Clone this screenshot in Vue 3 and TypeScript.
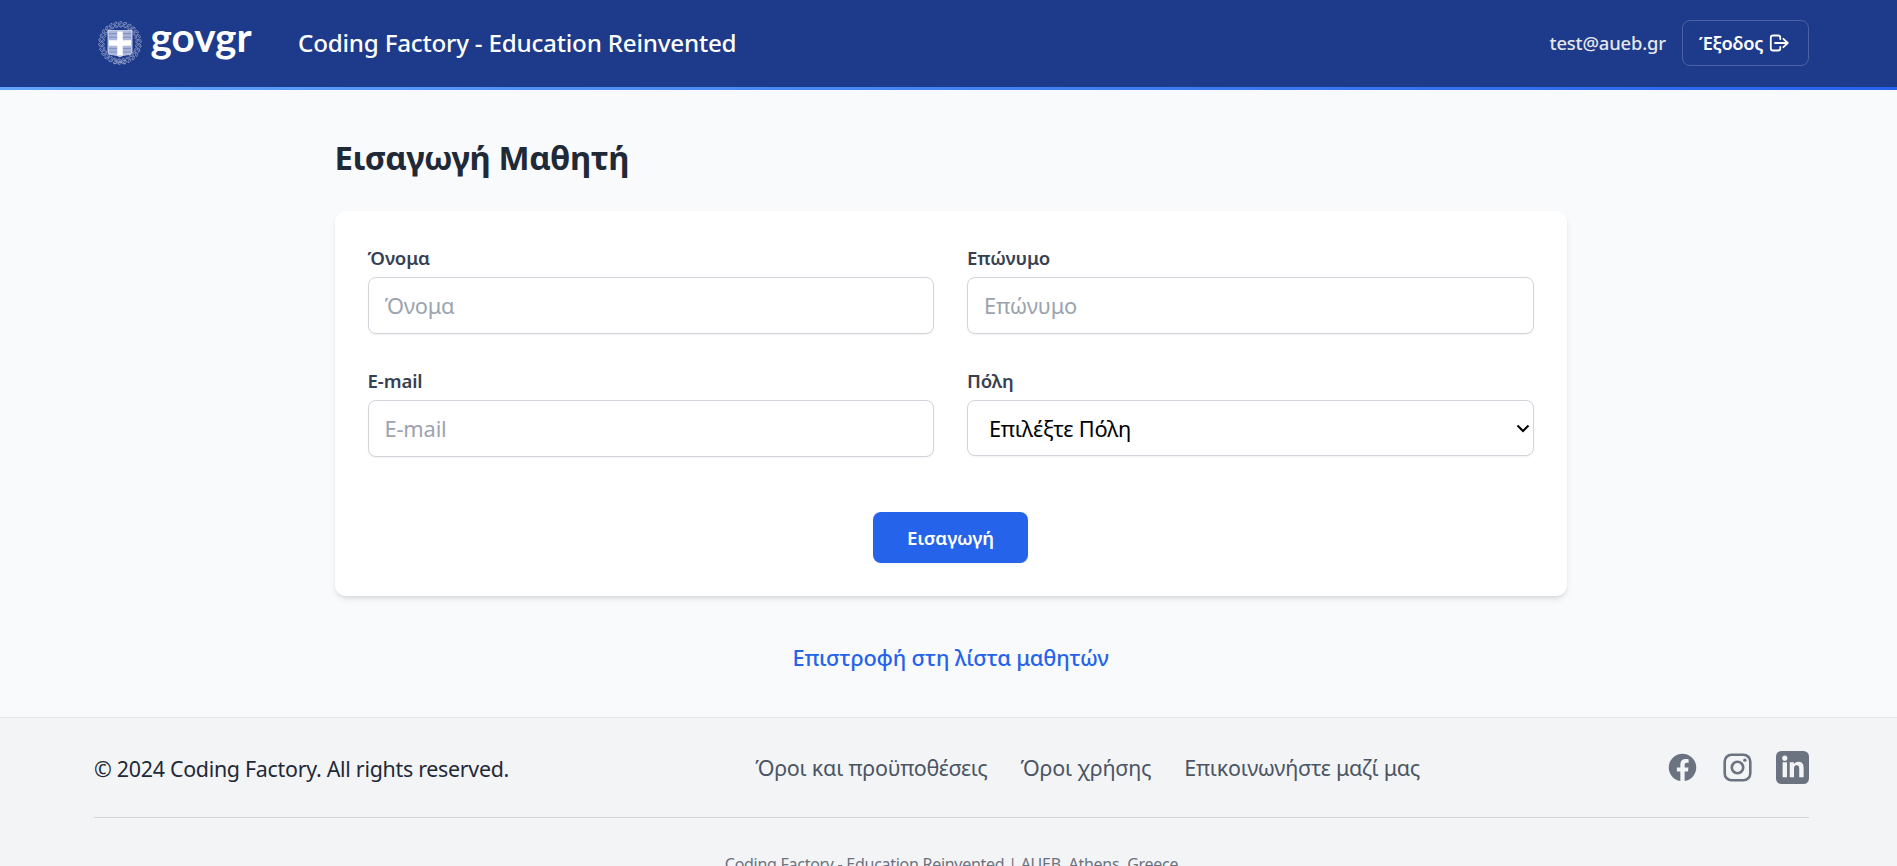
<script setup lang="ts">
import { reactive } from 'vue'

interface Student {
  firstname: string
  lastname: string
  email: string
  city: string
}

const student = reactive<Student>({ firstname: '', lastname: '', email: '', city: '' })
const cities: string[] = ['Αθήνα', 'Θεσσαλονίκη', 'Πάτρα']
const footerLinks: string[] = ['Όροι και προϋποθέσεις', 'Όροι χρήσης', 'Επικοινωνήστε μαζί μας']
const leaves: number[] = Array.from({ length: 26 }, (_, i) => (i * 360) / 26)
</script>

<template>
  <div class="page">
    <header class="header">
      <div class="shell header-row">
        <div class="brand">
          <svg class="emblem" viewBox="0 0 46 46" aria-hidden="true">
            <g class="wreath">
              <g v-for="a in leaves" :key="a" :transform="`rotate(${a} 23 23)`">
                <ellipse cx="23" cy="2.9" rx="2.1" ry="0.9" transform="rotate(-28 23 2.9)" />
                <ellipse cx="23" cy="6" rx="2" ry="0.8" transform="rotate(30 23 6)" />
              </g>
              <path d="M17 40l12 4M29 40l-12 4" />
            </g>
            <path class="shield" d="M11 10.6h24v20.8c0 2.2-1.4 3-3.4 3.2-3.6.4-6.4.9-8.6 2.3-2.2-1.4-5-1.9-8.6-2.3-2-.2-3.4-1-3.4-3.2z" />
            <path class="stripes" d="M12 13.7h22M12 17.2h22M12 28.7h22M12 32h22" />
            <path class="cross" d="M23 11.5v24M12 23h22" />
          </svg>
          <span class="wordmark">govgr</span>
        </div>
        <span class="site-title">Coding Factory - Education Reinvented</span>
        <span class="user">test@aueb.gr</span>
        <button class="logout" type="button">
          <span>Έξοδος</span>
          <svg viewBox="0 0 20 18" aria-hidden="true">
            <path d="M11.3 5V3.8A2.3 2.3 0 0 0 9 1.500H4.1a2.3 2.3 0 0 0-2.3 2.3v10.4a2.3 2.3 0 0 0 2.3 2.3H9a2.3 2.3 0 0 0 2.3-2.3V13M6 9h12.3M14.4 4.8 18.7 9l-4.3 4.2" />
          </svg>
        </button>
      </div>
      <div class="accent"></div>
    </header>

    <main class="content">
      <h1>Εισαγωγή Μαθητή</h1>
      <form class="card" @submit.prevent>
        <div class="fields">
          <div class="field">
            <label for="firstname">Όνομα</label>
            <input id="firstname" v-model="student.firstname" type="text" placeholder="Όνομα" />
          </div>
          <div class="field">
            <label for="lastname">Επώνυμο</label>
            <input id="lastname" v-model="student.lastname" type="text" placeholder="Επώνυμο" />
          </div>
          <div class="field">
            <label for="email">E-mail</label>
            <input id="email" v-model="student.email" type="email" placeholder="E-mail" />
          </div>
          <div class="field">
            <label for="city">Πόλη</label>
            <div class="select">
              <select id="city" v-model="student.city">
                <option value="">Επιλέξτε Πόλη</option>
                <option v-for="c in cities" :key="c" :value="c">{{ c }}</option>
              </select>
              <svg viewBox="0 0 14 9" aria-hidden="true"><path d="M1.5 1.5 7 7l5.5-5.5" /></svg>
            </div>
          </div>
        </div>
        <button class="submit" type="submit">Εισαγωγή</button>
      </form>
      <a class="back">Επιστροφή στη λίστα μαθητών</a>
    </main>

    <footer class="footer">
      <div class="shell">
        <div class="footer-row">
          <span class="copyright">© 2024 Coding Factory. All rights reserved.</span>
          <nav class="links">
            <a v-for="l in footerLinks" :key="l">{{ l }}</a>
          </nav>
          <div class="social">
            <svg viewBox="0 0 24 24" aria-label="Facebook">
              <path fill="currentColor" d="M12.001 2.002c-5.522 0-9.999 4.477-9.999 9.999 0 4.990 3.656 9.126 8.437 9.879v-6.988h-2.540v-2.891h2.540V9.798c0-2.508 1.493-3.891 3.776-3.891 1.094 0 2.240.195 2.240.195v2.459h-1.264c-1.240 0-1.628.772-1.628 1.563v1.875h2.771l-.443 2.891h-2.328v6.988C18.344 21.129 22 16.992 22 12.001c0-5.522-4.477-9.999-9.999-9.999z" />
            </svg>
            <svg viewBox="0 0 24 24" aria-label="Instagram" fill="none" stroke="currentColor" stroke-width="1.9">
              <rect x="2.7" y="2.7" width="18.6" height="18.6" rx="5" />
              <circle cx="12" cy="12" r="4.15" />
              <circle cx="17.35" cy="6.65" r="1.2" fill="currentColor" stroke="none" />
            </svg>
            <svg viewBox="0 0 24 24" aria-label="LinkedIn">
              <rect width="24" height="24" rx="4" fill="currentColor" />
              <g class="knockout">
                <circle cx="6.4" cy="5.2" r="1.85" />
                <path d="M4.800 8.100H8V19H4.800zM10 8.100h3v1.500c.5-1 1.700-1.800 3.300-1.800 3.100 0 3.800 2 3.800 4.800V19h-3.200v-5.500c0-1.400 0-3.100-1.850-3.100s-1.950 1.500-1.950 2.950V19H10z" />
              </g>
            </svg>
          </div>
        </div>
        <p class="address">Coding Factory - Education Reinvented | AUEB, Athens, Greece</p>
      </div>
    </footer>
  </div>
</template>

<style>
html,
body {
  margin: 0;
  height: 100%;
  overflow: hidden;
  background: #f9fafb;
}
</style>

<style scoped>
.page {
  height: 866px;
  overflow: hidden;
  background: #f9fafb;
  color: #1f2937;
  font-family: 'Noto Sans', 'Open Sans', sans-serif;
}
.page * {
  box-sizing: border-box;
}
.shell {
  width: 1715px;
  margin-left: 94px;
}

/* header */
.header {
  background: #1e3a8a;
  color: #fff;
}
.header-row {
  display: flex;
  align-items: center;
  height: 87px;
  padding-bottom: 1px;
}
.accent {
  height: 3px;
  background: linear-gradient(to right, #60a5fa, #2563eb);
}
.brand {
  display: flex;
  align-items: center;
  width: 204px;
  padding-left: 3px;
}
.emblem {
  width: 46px;
  height: 46px;
  flex: none;
}
.wreath {
  fill: none;
  stroke: #a9b4d8;
  stroke-width: 0.6;
}
.shield {
  fill: #a9b5da;
  stroke: #e3e8f4;
  stroke-width: 0.8;
}
.stripes {
  fill: none;
  stroke: #7d8dc0;
  stroke-width: 1;
}
.cross {
  fill: none;
  stroke: #fff;
  stroke-width: 5.5;
}
.wordmark {
  margin: -13px 0 0 7.5px;
  font-family: Lato, sans-serif;
  font-size: 40.5px;
  font-weight: 700;
  line-height: 48px;
}
.site-title {
  font-size: 24.2px;
  font-weight: 500;
  letter-spacing: -0.21px;
  line-height: 32px;
  white-space: nowrap;
}
.user {
  margin-left: auto;
  margin-right: 16px;
  color: #e5e7eb;
  font-size: 18.4px;
  font-weight: 550;
  letter-spacing: -0.15px;
  line-height: 26px;
}
.logout {
  display: flex;
  align-items: center;
  gap: 6px;
  width: 127px;
  height: 46px;
  padding: 0 0 0 16px;
  border: 1px solid rgba(255, 255, 255, 0.2);
  border-radius: 8px;
  background: transparent;
  color: #fff;
  font-family: inherit;
  font-size: 18.3px;
  font-weight: 600;
  letter-spacing: -0.28px;
  line-height: 26px;
}
.logout svg {
  width: 20px;
  height: 18px;
  fill: none;
  stroke: currentColor;
  stroke-width: 1.8;
  stroke-linecap: round;
  stroke-linejoin: round;
}

/* form */
.content {
  width: 1232px;
  margin-left: 334.5px;
  padding: 48px 0 44px;
  display: flex;
  flex-direction: column;
}
h1 {
  margin: 0 0 33px;
  font-size: 33px;
  font-weight: 700;
  letter-spacing: -0.45px;
  line-height: 40px;
}
.card {
  height: 385px;
  padding: 34px 33px 33px;
  border-radius: 11px;
  background: #fff;
  box-shadow: 0 4px 6px -1px rgba(0, 0, 0, 0.1), 0 2px 4px -2px rgba(0, 0, 0, 0.1);
  display: flex;
  flex-direction: column;
  justify-content: space-between;
  align-items: center;
}
.fields {
  width: 100%;
  display: grid;
  grid-template-columns: 1fr 1fr;
  gap: 34px 33px;
}
.field {
  display: flex;
  flex-direction: column;
  gap: 6px;
}
label {
  color: #374151;
  font-size: 18.6px;
  font-weight: 570;
  letter-spacing: -0.1px;
  line-height: 26px;
}
input,
select {
  width: 100%;
  height: 57px;
  padding: 0 16px;
  border: 1px solid #d1d5db;
  border-radius: 8px;
  background: #fff;
  color: #000;
  font-family: inherit;
  font-size: 21.8px;
  letter-spacing: -0.15px;
  outline: none;
  box-shadow: 0 1px 2px rgba(0, 0, 0, 0.05);
}
input::placeholder {
  color: #9ca3af;
  opacity: 1;
}
.select {
  position: relative;
}
select {
  display: block;
  height: 56px;
  padding-left: 21px;
  letter-spacing: -0.25px;
  appearance: none;
}
.select svg {
  position: absolute;
  right: 4px;
  top: 24px;
  width: 14px;
  height: 9px;
  fill: none;
  stroke: #000;
  stroke-width: 2;
}
.submit {
  width: 155px;
  height: 51px;
  padding: 0;
  border: 0;
  border-radius: 8px;
  background: #2563eb;
  color: #fff;
  font-family: inherit;
  font-size: 18.7px;
  font-weight: 600;
  letter-spacing: -0.1px;
  box-shadow: 0 1px 2px rgba(0, 0, 0, 0.05);
}
.back {
  margin-top: 45px;
  color: #2563eb;
  font-size: 21.8px;
  font-weight: 540;
  letter-spacing: -0.17px;
  line-height: 33px;
  text-align: center;
}

/* footer */
.footer {
  margin-top: -1px;
  padding-top: 33px;
  border-top: 1px solid #e5e7eb;
  background: #f3f4f6;
}
.footer-row {
  display: flex;
  align-items: center;
  justify-content: space-between;
  height: 67px;
  padding-bottom: 33px;
  border-bottom: 1px solid #d1d5db;
  line-height: 33px;
}
.copyright {
  padding-top: 1px;
  font-size: 21.4px;
  letter-spacing: -0.28px;
}
.links {
  display: flex;
  gap: 33px;
  color: #4b5563;
  font-size: 21.5px;
  letter-spacing: -0.24px;
}
.social {
  display: flex;
  gap: 22px;
  color: #6b7280;
}
.social svg {
  width: 33px;
  height: 33px;
}
.knockout {
  fill: #f3f4f6;
}
.address {
  margin: 0;
  padding: 33px 0 44px;
  color: #6b7280;
  font-size: 16px;
  letter-spacing: -0.28px;
  line-height: 26px;
  text-align: center;
}
</style>
